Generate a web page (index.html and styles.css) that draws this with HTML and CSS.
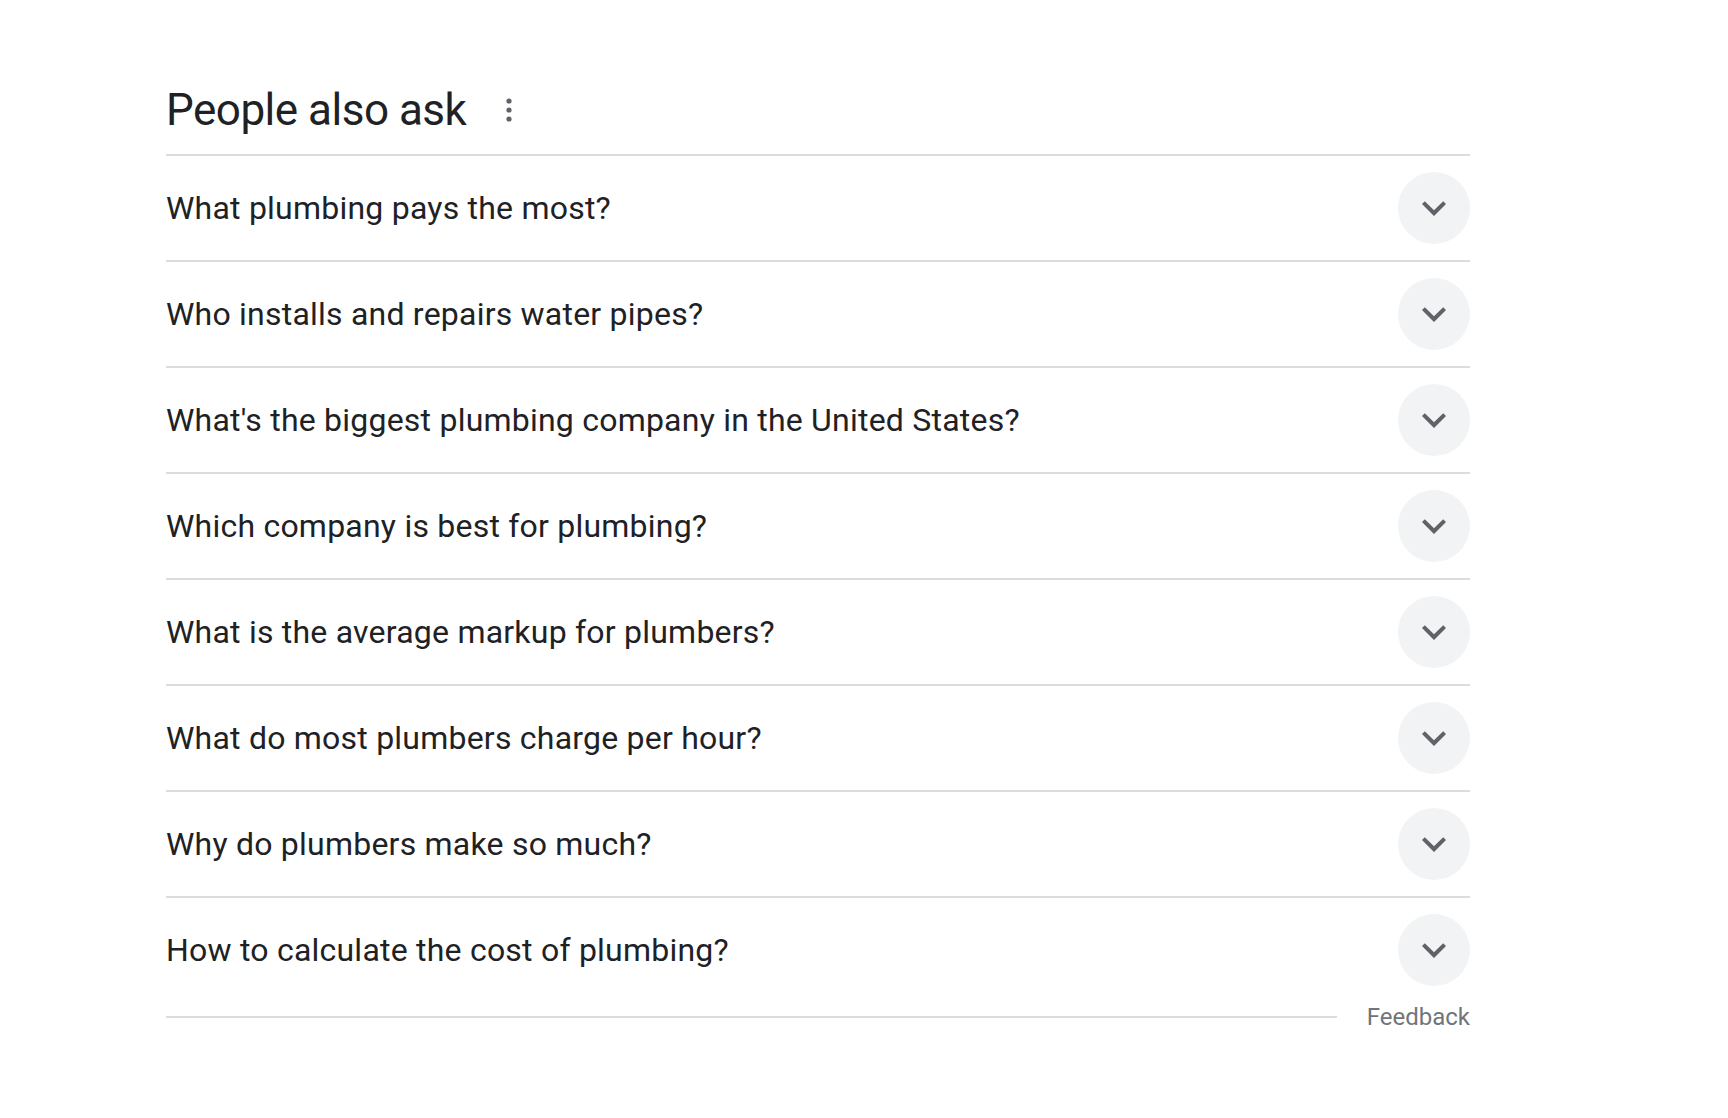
FILE: index.html
```html
<!DOCTYPE html>
<html>
<head>
    <meta charset="utf-8"/>
    <title>People also ask</title>
    <link rel="stylesheet" href="styles.css">
</head>
<body>
    <main class="paa">
        <div class="paa-head">
            <h2>People also ask</h2>
            <button class="more" aria-label="More options">
                <svg width="10" height="28" viewBox="0 0 10 28">
                    <circle cx="5" cy="5" r="2.6"/>
                    <circle cx="5" cy="14" r="2.6"/>
                    <circle cx="5" cy="23" r="2.6"/>
                </svg>
            </button>
        </div>
        <div class="paa-list">
            <div class="q"><span>What plumbing pays the most?</span><button class="toggle"><svg viewBox="0 0 24 24"><path d="M16.59 8.59L12 13.17 7.41 8.59 6 10l6 6 6-6z"/></svg></button></div>
            <div class="q"><span>Who installs and repairs water pipes?</span><button class="toggle"><svg viewBox="0 0 24 24"><path d="M16.59 8.59L12 13.17 7.41 8.59 6 10l6 6 6-6z"/></svg></button></div>
            <div class="q"><span>What's the biggest plumbing company in the United States?</span><button class="toggle"><svg viewBox="0 0 24 24"><path d="M16.59 8.59L12 13.17 7.41 8.59 6 10l6 6 6-6z"/></svg></button></div>
            <div class="q"><span>Which company is best for plumbing?</span><button class="toggle"><svg viewBox="0 0 24 24"><path d="M16.59 8.59L12 13.17 7.41 8.59 6 10l6 6 6-6z"/></svg></button></div>
            <div class="q"><span>What is the average markup for plumbers?</span><button class="toggle"><svg viewBox="0 0 24 24"><path d="M16.59 8.59L12 13.17 7.41 8.59 6 10l6 6 6-6z"/></svg></button></div>
            <div class="q"><span>What do most plumbers charge per hour?</span><button class="toggle"><svg viewBox="0 0 24 24"><path d="M16.59 8.59L12 13.17 7.41 8.59 6 10l6 6 6-6z"/></svg></button></div>
            <div class="q"><span>Why do plumbers make so much?</span><button class="toggle"><svg viewBox="0 0 24 24"><path d="M16.59 8.59L12 13.17 7.41 8.59 6 10l6 6 6-6z"/></svg></button></div>
            <div class="q"><span>How to calculate the cost of plumbing?</span><button class="toggle"><svg viewBox="0 0 24 24"><path d="M16.59 8.59L12 13.17 7.41 8.59 6 10l6 6 6-6z"/></svg></button></div>
        </div>
        <div class="paa-foot">
            <hr>
            <a href="#">Feedback</a>
        </div>
    </main>
</body>
</html>
```

FILE: styles.css
```css
html, body {
    margin: 0;
    background: #fff;
}
main.paa {
    width: 1304px;
    padding: 79px 0 0 166px;
    font-family: "Roboto", "Liberation Sans", sans-serif;
    color: #202124;
}
.paa-head {
    display: flex;
    align-items: center;
    height: 60px;
    margin-bottom: 15px;
}
.paa-head h2 {
    margin: 0;
    padding-top: 3px;
    font-size: 44px;
    font-weight: 400;
    line-height: 57px;
    letter-spacing: -0.5px;
}
button {
    border: none;
    padding: 0;
    cursor: pointer;
}
.more {
    display: flex;
    margin: 2px 0 0 38px;
    background: none;
}
.more svg {
    fill: #5f6368;
}
.q {
    display: flex;
    align-items: center;
    justify-content: space-between;
    height: 104px;
    border-top: 2px solid #dadce0;
    font-size: 32px;
    letter-spacing: 0.22px;
}
.toggle {
    display: flex;
    align-items: center;
    justify-content: center;
    width: 72px;
    height: 72px;
    border-radius: 50%;
    background: #f1f3f4;
}
.toggle svg {
    width: 48px;
    height: 48px;
    fill: #5f6368;
}
.paa-foot {
    display: flex;
    align-items: center;
    height: 30px;
}
.paa-foot hr {
    flex: 1;
    height: 2px;
    margin: 0 30px 0 0;
    border: none;
    background: #dadce0;
}
.paa-foot a {
    font-size: 24px;
    line-height: 30px;
    color: #70757a;
    text-decoration: none;
}
```
